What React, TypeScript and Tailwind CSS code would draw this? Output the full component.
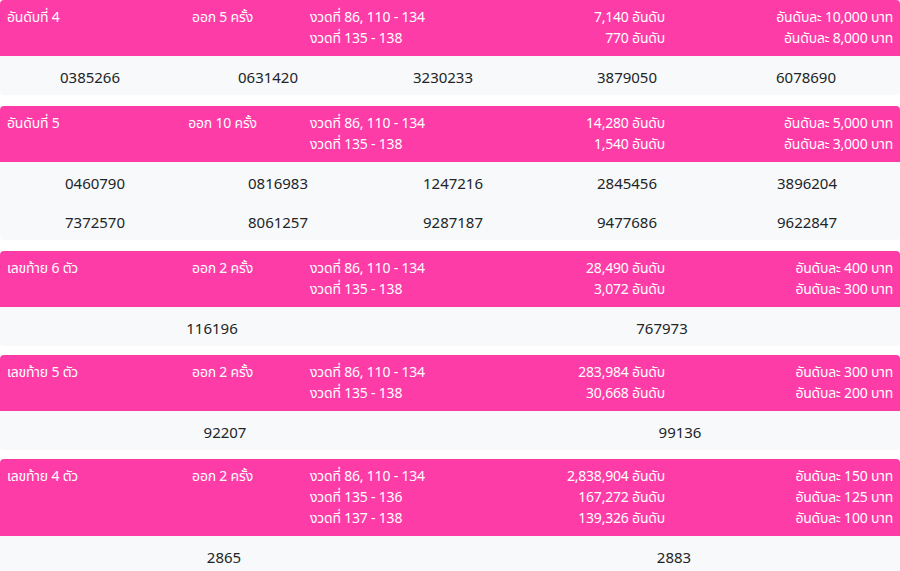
import React from "react";

type Block = {
  label: string;
  times: string;
  rounds: string[];
  counts: string[];
  prizes: string[];
  rows: string[][];
  cols: string;
  mb: string;
};

const blocks: Block[] = [
  {
    label: "อันดับที่ 4",
    times: "ออก 5 ครั้ง",
    rounds: ["งวดที่ 86, 110 - 134", "งวดที่ 135 - 138"],
    counts: ["7,140 อันดับ", "770 อันดับ"],
    prizes: ["อันดับละ 10,000 บาท", "อันดับละ 8,000 บาท"],
    rows: [["0385266", "0631420", "3230233", "3879050", "6078690"]],
    cols: "grid-cols-[180px_176px_174px_194px_164px]",
    mb: "mb-[11px]",
  },
  {
    label: "อันดับที่ 5",
    times: "ออก 10 ครั้ง",
    rounds: ["งวดที่ 86, 110 - 134", "งวดที่ 135 - 138"],
    counts: ["14,280 อันดับ", "1,540 อันดับ"],
    prizes: ["อันดับละ 5,000 บาท", "อันดับละ 3,000 บาท"],
    rows: [
      ["0460790", "0816983", "1247216", "2845456", "3896204"],
      ["7372570", "8061257", "9287187", "9477686", "9622847"],
    ],
    cols: "grid-cols-[190px_176px_174px_174px_186px]",
    mb: "mb-[11px]",
  },
  {
    label: "เลขท้าย 6 ตัว",
    times: "ออก 2 ครั้ง",
    rounds: ["งวดที่ 86, 110 - 134", "งวดที่ 135 - 138"],
    counts: ["28,490 อันดับ", "3,072 อันดับ"],
    prizes: ["อันดับละ 400 บาท", "อันดับละ 300 บาท"],
    rows: [["116196", "767973"]],
    cols: "grid-cols-[424px_476px]",
    mb: "mb-[9px]",
  },
  {
    label: "เลขท้าย 5 ตัว",
    times: "ออก 2 ครั้ง",
    rounds: ["งวดที่ 86, 110 - 134", "งวดที่ 135 - 138"],
    counts: ["283,984 อันดับ", "30,668 อันดับ"],
    prizes: ["อันดับละ 300 บาท", "อันดับละ 200 บาท"],
    rows: [["92207", "99136"]],
    cols: "grid-cols-[450px_460px]",
    mb: "mb-[9px]",
  },
  {
    label: "เลขท้าย 4 ตัว",
    times: "ออก 2 ครั้ง",
    rounds: ["งวดที่ 86, 110 - 134", "งวดที่ 135 - 136", "งวดที่ 137 - 138"],
    counts: ["2,838,904 อันดับ", "167,272 อันดับ", "139,326 อันดับ"],
    prizes: ["อันดับละ 150 บาท", "อันดับละ 125 บาท", "อันดับละ 100 บาท"],
    rows: [["2865", "2883"]],
    cols: "grid-cols-[448px_452px]",
    mb: "mb-[10px]",
  },
];

function Lines({ items }: { items: string[] }) {
  return (
    <>
      {items.map((t, i) => (
        <div key={i} className="whitespace-nowrap">
          {t}
        </div>
      ))}
    </>
  );
}

export default function App() {
  return (
    <div
      className="w-[900px] h-[571px] overflow-hidden bg-white"
      style={{ fontFamily: '"Noto Sans Thai", "Noto Sans", "DejaVu Sans", sans-serif' }}
    >
      {blocks.map((b, bi) => (
        <div key={bi} className={`${b.mb} rounded-[4px] overflow-hidden bg-[#f8f9fa]`}>
          <div className="grid grid-cols-[150px_145px_185px_185px_1fr] bg-[#fe3ca7] text-white text-[14px] tracking-[-0.2px] leading-[21px] pt-[7px] pb-[7px]">
            <div className="pl-[7px] whitespace-nowrap">{b.label}</div>
            <div className="text-center whitespace-nowrap">{b.times}</div>
            <div className="pl-[15px]">
              <Lines items={b.rounds} />
            </div>
            <div className="text-right">
              <Lines items={b.counts} />
            </div>
            <div className="text-right pr-[7px]">
              <Lines items={b.prizes} />
            </div>
          </div>
          <div className="text-[15px] text-[#212529]">
            {b.rows.map((r, ri) => (
              <div key={ri} className={`grid ${b.cols} h-[39px] pt-[8px] items-center`}>
                {r.map((n, ni) => (
                  <div key={ni} className="text-center">
                    {n}
                  </div>
                ))}
              </div>
            ))}
          </div>
        </div>
      ))}
    </div>
  );
}
